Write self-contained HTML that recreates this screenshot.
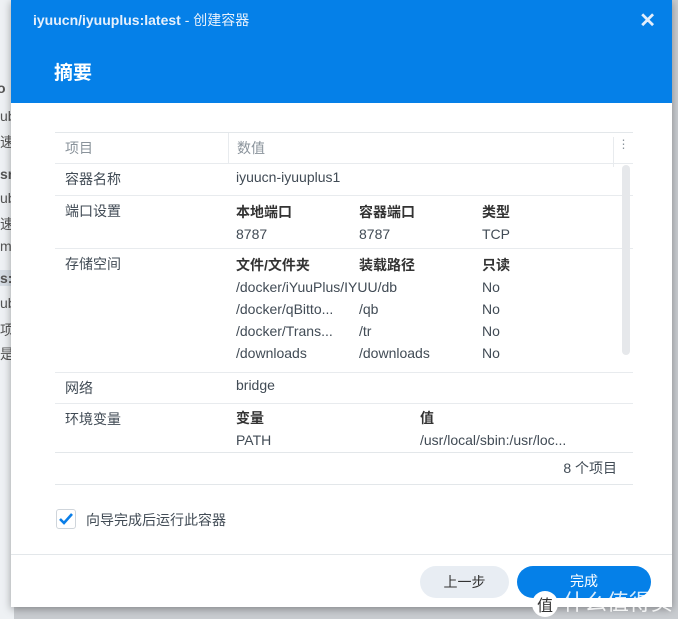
<!DOCTYPE html>
<html><head><meta charset="utf-8"><style>
*{margin:0;padding:0;box-sizing:border-box}
body{width:678px;height:619px;background:#c9ccd0;position:relative;overflow:hidden;font-family:"Liberation Sans","Noto Sans CJK SC",sans-serif;color:#414b55;font-size:14px}
.side{position:absolute;left:0;top:0;width:14px;height:619px;background:#eef1f4}
.side div{position:absolute;left:0;font-size:14px;color:#555;white-space:nowrap}
.dlg{position:absolute;left:11px;top:0;width:661px;height:607px;background:#fff;box-shadow:0 2px 8px rgba(0,0,0,.35)}
.hd{height:103px;background:#0580e8;color:#fff;position:relative}
.t1{position:absolute;left:22px;top:10px;font-size:14px;font-weight:bold;color:#e6f0fc}
.t1 span{font-weight:normal}
.t2{position:absolute;left:43px;top:58px;font-size:19px;font-weight:bold}
.x{position:absolute;right:16px;top:8px;font-size:20px;font-weight:bold;color:#e3eefc}
.tbl{position:absolute;left:44px;top:132px;width:578px;border-top:1px solid #e3e7ea;border-bottom:1px solid #e3e7ea}
.r{position:relative;border-bottom:1px solid #e8ebee}
.r .k{position:absolute;left:10px;top:5px}
.c{position:absolute;top:0}
.b{font-weight:bold;color:#333}
.sb{position:absolute;left:567px;top:32px;width:8px;height:190px;background:#e6e8eb;border-radius:4px}
.btn{position:absolute;top:566px;height:32px;border-radius:16px;text-align:center;line-height:32px;font-size:14px}
</style></head><body>
<div class="side">
<div style="top:80px;font-weight:bold;left:-3px">o</div>
<div style="top:108px">ub</div>
<div style="top:132px">速</div>
<div style="top:166px;font-weight:bold">sr</div>
<div style="top:190px">ub</div>
<div style="top:214px">速</div>
<div style="top:238px">m</div>
<div style="top:270px;font-weight:bold;background:#d6dde5;width:14px">s:</div>
<div style="top:295px">ub</div>
<div style="top:320px">项</div>
<div style="top:344px">是</div>
</div>
<div class="dlg">
<div class="hd"><div class="t1">iyuucn/iyuuplus:latest <span>- 创建容器</span></div><div class="t2">摘要</div><div class="x">✕</div></div>
<div class="tbl">
<div class="r" style="height:31px;color:#8a939b"><div class="k">项目</div><div class="c" style="left:173px;top:0;height:30px;border-left:1px solid #e8ebee;padding:5px 0 0 8px">数值</div><div class="c" style="left:558px;height:30px;border-left:1px solid #e8ebee;width:20px;text-align:center;top:4px;font-size:12px">⋮</div></div>
<div class="r" style="height:32px"><div class="k">容器名称</div><div class="c" style="left:181px;top:5px">iyuucn-iyuuplus1</div></div>
<div class="r" style="height:53px"><div class="k">端口设置</div>
<div class="c" style="left:181px;top:5px;line-height:22px"><span class="b">本地端口</span><br>8787</div>
<div class="c" style="left:304px;top:5px;line-height:22px"><span class="b">容器端口</span><br>8787</div>
<div class="c" style="left:427px;top:5px;line-height:22px"><span class="b">类型</span><br>TCP</div></div>
<div class="r" style="height:124px"><div class="k">存储空间</div>
<div class="c" style="left:181px;top:5px;line-height:22px"><span class="b">文件/文件夹</span><br>/docker/iYuuPlus/IYUU/db<br>/docker/qBitto...<br>/docker/Trans...<br>/downloads</div>
<div class="c" style="left:304px;top:5px;line-height:22px"><span class="b">装载路径</span><br>&nbsp;<br>/qb<br>/tr<br>/downloads</div>
<div class="c" style="left:427px;top:5px;line-height:22px"><span class="b">只读</span><br>No<br>No<br>No<br>No</div></div>
<div class="r" style="height:31px"><div class="k">网络</div><div class="c" style="left:181px;top:4px">bridge</div></div>
<div class="r" style="height:49px;border-bottom:1px solid #e3e7ea"><div class="k">环境变量</div>
<div class="c" style="left:181px;top:3px;line-height:22px"><span class="b">变量</span><br>PATH</div>
<div class="c" style="left:365px;top:3px;line-height:22px"><span class="b">值</span><br>/usr/local/sbin:/usr/loc...</div></div>
<div style="height:31px;text-align:right;padding:5px 16px 0 0">8 个项目</div>
<div class="sb"></div>
</div>
<div style="position:absolute;left:45px;top:509px;width:20px;height:20px;border:1px solid #cfd5db;border-radius:3px"><svg width="18" height="18" viewBox="0 0 18 18"><path d="M3 9l4 4 8-9" stroke="#0a7ee8" stroke-width="2.6" fill="none"/></svg></div>
<div style="position:absolute;left:75px;top:510px">向导完成后运行此容器</div>
<div style="position:absolute;left:0;top:554px;width:661px;border-top:1px solid #e3e7ea"></div>
<div class="btn" style="left:409px;width:89px;background:#e8edf3;color:#333">上一步</div>
<div class="btn" style="left:506px;width:134px;background:#0580e8;color:#fff;line-height:30px">完成</div>
</div>
<div style="position:absolute;left:532px;top:585px;font-size:22px;color:rgba(255,255,255,.85);font-family:'Noto Sans CJK SC',sans-serif"><span style="display:inline-block;width:26px;height:26px;border-radius:13px;background:#fff;color:#333;font-size:16px;text-align:center;line-height:26px;vertical-align:middle">值</span> 什么值得买</div>
</body></html>
